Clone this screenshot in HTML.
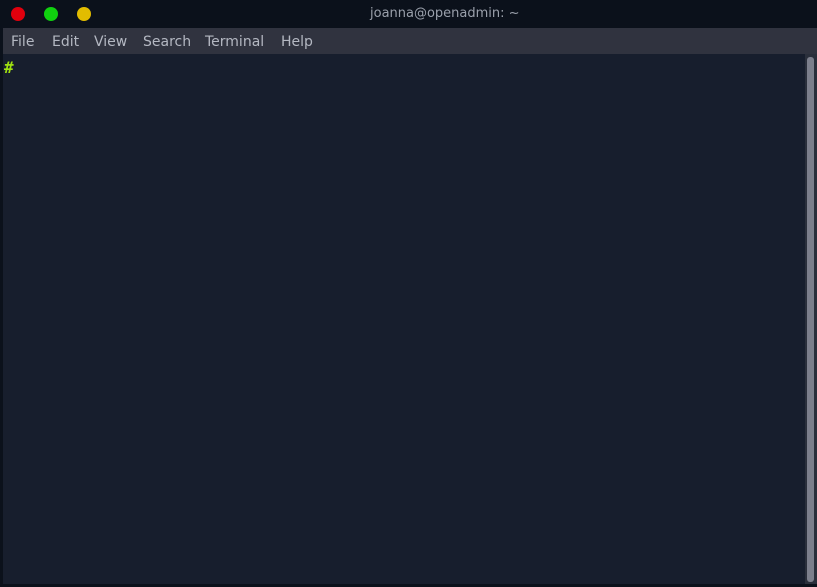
<!DOCTYPE html>
<html><head><meta charset="utf-8"><style>
html,body{margin:0;padding:0;width:817px;height:587px;overflow:hidden;background:#0b111b;font-family:"DejaVu Sans","Liberation Sans",sans-serif;}
.title{position:absolute;left:0;top:0;width:817px;height:28px;background:#0b111b;}
.dot{position:absolute;top:7px;width:14px;height:14px;border-radius:50%;}
.ttext{position:absolute;left:370px;top:6px;font-size:13px;color:#9aa0ab;}
.menu{position:absolute;left:3px;top:28px;width:814px;height:26px;background:#30333f;}
.menu span{position:absolute;top:6px;font-size:14px;color:#b4b8c2;}
.term{position:absolute;left:3px;top:54px;width:802px;height:530px;background:#171e2d;}
.prompt{position:absolute;left:4px;top:58px;font-family:"DejaVu Sans Mono","Liberation Mono",monospace;font-size:16px;font-weight:bold;color:#9fe010;}
.track{position:absolute;left:805px;top:54px;width:12px;height:530px;background:#2a2f3b;}
.thumb{position:absolute;left:807px;top:57px;width:7px;height:525px;background:#7c7f8c;border-radius:3px;}
</style></head><body>
<div class="title">
<div class="dot" style="left:11px;background:#e0000d"></div>
<div class="dot" style="left:44px;background:#10d10f"></div>
<div class="dot" style="left:77px;background:#e2bc00"></div>
<div class="ttext">joanna@openadmin: ~</div>
</div>
<div class="menu">
<span style="left:8px">File</span>
<span style="left:49px">Edit</span>
<span style="left:91px">View</span>
<span style="left:140px">Search</span>
<span style="left:202px">Terminal</span>
<span style="left:278px">Help</span>
</div>
<div class="term"></div>
<div class="prompt">#</div>
<div class="track"></div>
<div class="thumb"></div>
</body></html>
